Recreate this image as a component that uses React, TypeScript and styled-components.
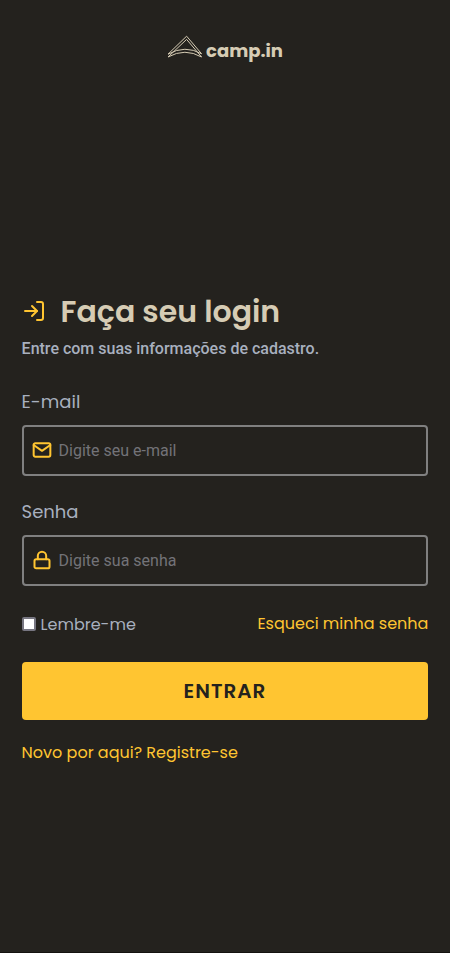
import React from 'react';
import styled, { createGlobalStyle } from 'styled-components';
import { FiLogIn, FiMail, FiLock } from 'react-icons/fi';

const GlobalStyle = createGlobalStyle`
  * { box-sizing: border-box; margin: 0; padding: 0; }
  body { background: #24221e; }
`;

const display = `'Poppins', 'Inter', sans-serif`;
const body = `'Roboto', sans-serif`;

const Page = styled.div`
  height: 953px;
  padding: 0 21.6px;
  background: #24221e;
  border-bottom: 1px solid #14120f;
  display: flex;
  flex-direction: column;
`;

const Brand = styled.header`
  height: 96px;
  display: flex;
  justify-content: center;
  align-items: center;
  gap: 4px;
`;

const BrandMark = styled.svg`
  width: 35px;
  height: 24px;
  margin-top: -2px;
`;

const Text = styled.span<{ $size: number; $track?: number; $weight?: number }>`
  font-family: ${display};
  font-size: ${p => p.$size}px;
  font-weight: ${p => p.$weight ?? 400};
  letter-spacing: ${p => p.$track ?? 0}px;
  white-space: nowrap;
`;

const BrandName = styled(Text)`
  color: #d6ccb4;
  line-height: 28px;
  margin-top: 6px;
`;

const Form = styled.form`
  margin-top: 191px;
  display: flex;
  flex-direction: column;
`;

const Heading = styled.h1`
  height: 48px;
  display: flex;
  align-items: center;
  gap: 15px;
  color: #d6ccb4;
  line-height: 48px;
  & > svg { color: #ffc531; }
  & > span { padding-top: 2px; }
`;

const Lead = styled.p`
  height: 24px;
  margin-top: 2px;
  font: 500 16px/24px ${body};
  color: #a8b0bf;
`;

const Field = styled.label`
  margin-top: 26px;
  height: 84px;
  display: flex;
  flex-direction: column;
  color: #a8b0bf;
`;

const FieldLabel = styled(Text)`
  flex: none;
  height: 38px;
  line-height: 30px;
`;

const InputBox = styled.span`
  flex: none;
  height: 51px;
  border: 2px solid #808080;
  border-radius: 4px;
  padding-left: 8px;
  display: flex;
  align-items: center;
  gap: 7px;
  color: #ffc531;
  & > svg { margin-bottom: 1px; stroke-width: 2.4; }
`;

const Input = styled.input`
  flex: 1;
  min-width: 0;
  height: 40px;
  border: 0;
  outline: 0;
  background: transparent;
  color: #a8b0bf;
  font: 400 16px ${body};
  &::placeholder { color: #737378; }
`;

const Options = styled.div`
  margin-top: 31px;
  height: 24px;
  display: flex;
  justify-content: space-between;
  line-height: 24px;
`;

const Remember = styled.label`
  display: flex;
  align-items: center;
  gap: 5px;
  color: #a8b0bf;
  padding-top: 1px;
`;

const Check = styled.input`
  appearance: none;
  width: 14px;
  height: 14px;
  margin-bottom: 1px;
  border: 2px solid #777681;
  border-radius: 2px;
  background: #fff;
  &:checked { background: #ffc531; }
`;

const Link = styled.a`
  color: #ffc531;
  text-decoration: none;
  line-height: 24px;
`;

const Submit = styled.button`
  margin-top: 26px;
  height: 58px;
  border: 0;
  border-radius: 4px;
  background: #ffc531;
  color: #24221e;
`;

const Register = styled(Link)`
  margin-top: 21px;
`;

export default function App() {
  return (
    <>
      <GlobalStyle />
      <Page>
        <Brand>
          <BrandMark viewBox="0 0 35 24" fill="none" stroke="#d6ccb4" strokeWidth="1">
            <path d="M1 19.2 19.6 1.2 34.6 18.8" />
            <path d="M1 22 19.6 4.4 34.6 22" />
            <path d="M1 19.2Q18 9.5 34.6 18.8" />
            <path d="M1 22Q18 12.5 34.6 22" />
          </BrandMark>
          <BrandName $size={18} $weight={700}>camp.in</BrandName>
        </Brand>
        <Form>
          <Heading>
            <FiLogIn size={24} />
            <Text $size={30} $weight={600}>Faça seu login</Text>
          </Heading>
          <Lead>Entre com suas informações de cadastro.</Lead>
          <Field>
            <FieldLabel $size={18}>E-mail</FieldLabel>
            <InputBox>
              <FiMail size={20} />
              <Input type="email" placeholder="Digite seu e-mail" />
            </InputBox>
          </Field>
          <Field>
            <FieldLabel $size={18}>Senha</FieldLabel>
            <InputBox>
              <FiLock size={20} />
              <Input type="password" placeholder="Digite sua senha" />
            </InputBox>
          </Field>
          <Options>
            <Remember>
              <Check type="checkbox" />
              <Text $size={16}>Lembre-me</Text>
            </Remember>
            <Link><Text $size={16}>Esqueci minha senha</Text></Link>
          </Options>
          <Submit type="button"><Text $size={20} $weight={600} $track={1}>ENTRAR</Text></Submit>
          <Register><Text $size={16}>Novo por aqui? Registre-se</Text></Register>
        </Form>
      </Page>
    </>
  );
}
